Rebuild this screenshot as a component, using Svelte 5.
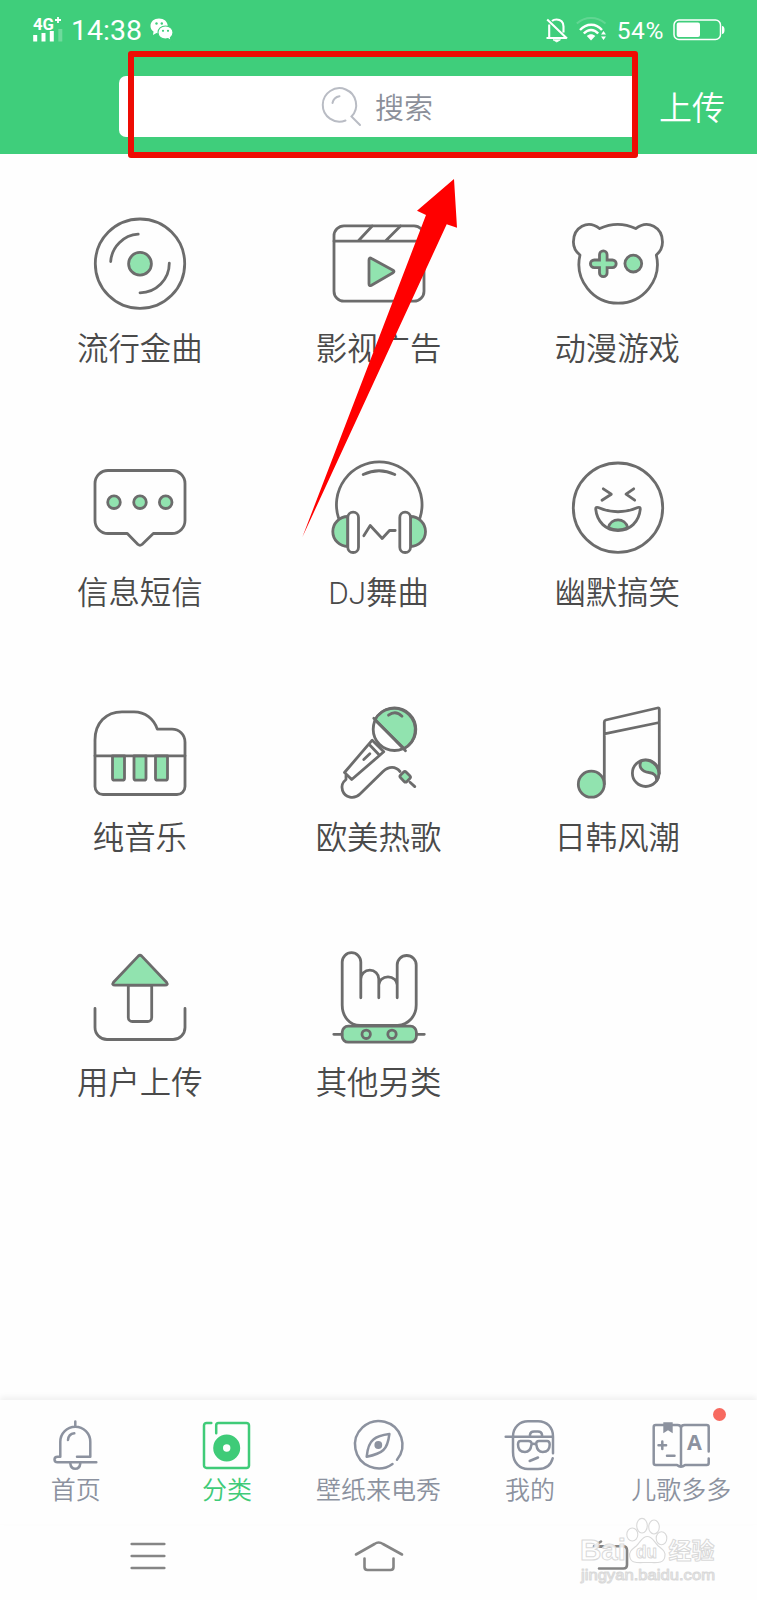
<script lang="ts">
  const categories = [
    { id: 'disc', label: '流行金曲' },
    { id: 'movie', label: '影视广告' },
    { id: 'bear', label: '动漫游戏' },
    { id: 'message', label: '信息短信' },
    { id: 'headphones', label: 'DJ舞曲' },
    { id: 'laugh', label: '幽默搞笑' },
    { id: 'piano', label: '纯音乐' },
    { id: 'mic', label: '欧美热歌' },
    { id: 'note', label: '日韩风潮' },
    { id: 'upload', label: '用户上传' },
    { id: 'rock', label: '其他另类' }
  ];

  const tabs = [
    { id: 'home', label: '首页' },
    { id: 'category', label: '分类' },
    { id: 'wallpaper', label: '壁纸来电秀' },
    { id: 'mine', label: '我的' },
    { id: 'kids', label: '儿歌多多', badge: true }
  ];

  let active = 'category';
</script>

<div class="screen">
  <header>
    <div class="status">
      <svg class="signal" width="30" height="28" viewBox="0 0 30 28">
        <text x="0" y="13.500" font-size="17" font-weight="700" textLength="21" lengthAdjust="spacingAndGlyphs">4G</text>
        <path d="M25 1v6M22 4h6" stroke="#fff" stroke-width="1.8" />
        <path d="M2.2 19v6.500M10.500 17v8.500M18.800 15v10.500" stroke="#fff" stroke-width="4" />
        <path d="M27.300 13v12.500" stroke="#fff" stroke-opacity=".25" stroke-width="4" />
      </svg>
      <span class="time">14:38</span>
      <svg class="wechat" width="24" height="24" viewBox="0 0 24 24">
        <path d="M9 .5C4 .5.5 3.700.5 7.900c0 2.300 1.200 4.300 3 5.700L3 17l3.500-2 2.500.4c5 0 8.700-3.300 8.700-7.500S14 .5 9 .5z" fill="#fff" />
        <path d="M15.500 8c-4.500 0-7.500 2.900-7.500 6.500 0 3.700 3 6.600 7.500 6.600l2.400-.4 3 1.800-.5-2.900c1.600-1.200 2.600-3 2.600-5.100 0-3.600-3.200-6.500-7.500-6.500z" fill="#fff" stroke="#3fce7b" stroke-width="1.100" />
        <g fill="#3fce7b">
          <circle cx="6.500" cy="5.500" r="1.200" /><circle cx="11.800" cy="5.500" r="1.200" />
          <circle cx="13" cy="12.800" r="1.100" /><circle cx="18" cy="12.800" r="1.100" />
        </g>
      </svg>
      <span class="spacer"></span>
      <svg class="mute" width="22" height="26" viewBox="0 0 22 26" fill="none" stroke="#fff" stroke-width="2.100">
        <path d="M.5 21h20M3.200 21V7.500M17.500 15.500V9.500c0-4.500-2.800-7-7-7-1.800 0-3.300.5-4.500 1.600M1.200 2.500 21 21.500" />
        <path d="M7 22.800h7.500l-3.700 2.200z" fill="#fff" stroke-width=".8" />
      </svg>
      <svg class="wifi" width="32" height="24" viewBox="0 0 32 24" fill="none" stroke="#fff" stroke-width="2.400">
        <path d="M.8 5.500C9-2 21-2 29.500 5.500" stroke-opacity=".18" stroke-width="2" />
        <path d="M4 12c6.500-7 16-7 22 0M7.800 15.500c4.500-4.600 10-4.600 14.400 0" />
        <path d="M10.800 18c2.700-2.400 5.800-2.400 8.500 0L15 22.500z" fill="#fff" stroke="none" />
        <path d="M25 16.500h5l-2.500-3.500zM25 18.500h5L27.500 22z" fill="#fff" stroke="none" />
      </svg>
      <span class="percent">54%</span>
      <svg class="battery" width="52" height="22" viewBox="0 0 52 22">
        <rect x="1" y="1" width="46.500" height="19.500" rx="5" fill="none" stroke="#fff" stroke-width="1.500" />
        <rect x="3.700" y="3.500" width="23.300" height="14.500" rx="2" fill="#fff" />
        <path d="M49 7q2.500 0 2.500 4T49 15z" fill="#fff" />
      </svg>
    </div>
    <div class="bar">
      <div class="search">
        <svg width="42" height="42" viewBox="0 0 42 42" fill="none" stroke="#b9bcc4" stroke-width="2" stroke-linecap="round">
          <path d="M24.500 34.500A16.700 16.700 0 1 1 30.500 30.500L39 39" />
          <path d="M11.500 17a8.500 8.500 0 0 1 7-6.800" />
        </svg>
        <span>搜索</span>
      </div>
      <span class="send">上传</span>
    </div>
    <div class="marker"></div>
  </header>

  <main>
    {#each categories as item}
      <div class="category">
        <svg class="icon" width="94" height="94" viewBox="0 0 94 94">
          {#if item.id === 'disc'}
            <circle cx="47" cy="46.700" r="44.700" />
            <circle class="tint" cx="47" cy="46.700" r="11.400" />
            <path d="M17.700 44.500a29.500 29.500 0 0 1 27.500-27.300M76.300 46.200A29.500 29.500 0 0 1 47 75.800" />
          {:else if item.id === 'movie'}
            <rect x="2" y="8.800" width="90" height="75.400" rx="10" />
            <path d="M2 24.200h90M26.200 24l14-15M53.500 24l15-15" />
            <path class="tint" d="M37 43q0-3 2.500-1.500L61 53.300q2 1.200 0 2.400L39.500 68.300Q37 69.500 37 67z" />
          {:else if item.id === 'bear'}
            <path d="M28.700 11.600Q46.700 3 64.700 11.600C77 2 91.500 10.500 91.500 25C91.500 30 89.500 34.500 85.300 38A39.200 39.200 0 1 1 9 38C4.500 34.500 2.400 30 2.400 25C2.400 10.500 16.500 2 28.700 11.600z" />
            <path d="M23.200 46.800h18.200M32.300 37.700v18.200" stroke-width="10.400" />
            <path d="M23.200 46.800h18.200M32.300 37.700v18.200" class="core" />
            <circle class="tint" cx="62.300" cy="46.600" r="8.400" />
          {:else if item.id === 'message'}
            <path d="M15 9.500h64a13 13 0 0 1 13 13v37a13 13 0 0 1-13 13H60.300L49 83.500q-2 1.600-4 0L34.300 72.500H15a13 13 0 0 1-13-13v-37a13 13 0 0 1 13-13z" />
            <circle class="tint" cx="21" cy="41.200" r="6.300" />
            <circle class="tint" cx="47" cy="41.200" r="6.300" />
            <circle class="tint" cx="72.700" cy="41.200" r="6.300" />
          {:else if item.id === 'headphones'}
            <path d="M6.500 56.800A42.800 42.800 0 1 1 88 56.800M31.200 13.500q15.800-7.500 31.600 0" />
            <path class="tint" d="M15.800 55.500a15 15 0 0 0 0 30zM78.500 55.500a15 15 0 0 1 0 30z" />
            <rect class="blank" x="15.800" y="51.200" width="10.700" height="40.300" rx="5.300" />
            <rect class="blank" x="67.800" y="51.200" width="10.700" height="40.300" rx="5.300" />
            <path d="m31.800 74.800 6.400-10.300 12 13 7.300-8h5.700" />
          {:else if item.id === 'laugh'}
            <circle cx="47" cy="46.700" r="44.700" />
            <path d="m32.300 27.800 8 5.400-9.300 6M62.700 27.800 55 33.200l8.700 6" />
            <path d="M24.700 48q0-2.200 2.500-1.500 19.800 8.500 39.600 0 2.500-.7 2.500 1.500C68 61 59 69.500 47 69.500S26 61 24.700 48z" />
            <path class="tint" d="M37.300 66.700c2.500-10.500 17-10.500 19.400 0q-9.700 4.500-19.400 0z" />
          {:else if item.id === 'piano'}
            <path d="M2 34C2 17 13 5.800 29 5.800h12c11 0 20 7 23.300 17.400H79c7 0 13 5 13 13v44.300a8 8 0 0 1-8 8H10a8 8 0 0 1-8-8z" />
            <path class="tint" d="M19.500 49.800h12v22.400a2 2 0 0 1-2 2h-8a2 2 0 0 1-2-2zM41 49.800h12v22.400a2 2 0 0 1-2 2h-8a2 2 0 0 1-2-2zM62.500 49.800h12v22.400a2 2 0 0 1-2 2h-8a2 2 0 0 1-2-2z" />
            <path d="M2 49.800h90" />
          {:else if item.id === 'mic'}
            <circle cx="62.500" cy="23.200" r="21.300" />
            <path class="tint" d="M43 14A21.300 21.300 0 1 1 72 42.500z" />
            <path d="m41.800 12.200 31.700 32.600M56.500 9.200q7-5.500 13.500 1" />
            <path d="M40.200 34.200 12.500 66.500l7.200 7 32.100-27.700zM37 38.200l10.500 11M31.800 53.500l6-5.700" />
            <path d="M14 69.500v4c-3.500 2.800-5 6.500-3.500 11 2.500 7.200 11.500 9.300 17.500 3.500l23-22.500c6-5.500 12.500-5.500 17 0M78 76.200l4.800 4.400" />
            <rect class="tint" x="68.700" y="66.800" width="9" height="8" rx="2" transform="rotate(45 73.200 70.800)" />
          {:else if item.id === 'note'}
            <circle class="tint" cx="20.300" cy="78.200" r="13" />
            <circle cx="74.700" cy="67.200" r="13.300" />
            <path class="tint" d="M70.500 54.800a13.300 13.300 0 0 1 15 20.200c.5-5-2-8-7.500-8.500C70 65.500 67 60 70.500 54.800z" />
            <path d="M33.300 78V16q0-1.500 1.500-2L86.500 2q1.800-.4 1.800 1.500v64M33.300 27.800l55-11.300" />
          {:else if item.id === 'upload'}
            <path d="M35.300 34.200h23.400v32.300a4 4 0 0 1-4 4H39.300a4 4 0 0 1-4-4z" />
            <path class="tint" d="m45.500 4.900-25 26.300q-2 3 1.500 3h50q3.500 0 1.500-3l-25-26.300q-1.500-1.300-3 0z" />
            <path d="M2 57.500v19a12 12 0 0 0 12 12h66a12 12 0 0 0 12-12v-19" />
          {:else}
            <path d="M28.800 46.800V11A9.300 9.300 0 0 0 10.200 11v43c0 11 7 20.500 18 20.500h37.500c11-1 18.500-9.500 18.500-20.500V14a9.400 9.400 0 0 0-19 0v32.800M28.800 28a9 8.800 0 0 1 18 0v18.800M46.800 34a9.200 8.200 0 0 1 18.400 0" />
            <rect class="tint" x="10.200" y="75.200" width="74.200" height="16" rx="6" />
            <circle class="tint" cx="34.200" cy="83.300" r="4.200" />
            <circle class="tint" cx="60" cy="83.300" r="4.200" />
            <path d="M1.800 83.300h8M84.800 83.300h7.500" />
          {/if}
        </svg>
        <span class="label">{item.label}</span>
      </div>
    {/each}
  </main>

  <nav class="tabs">
    {#each tabs as tab}
      <div class="tab" class:active={tab.id === active}>
        <svg width="60" height="50" viewBox="0 0 60 50">
          {#if tab.id === 'home'}
            <path d="M29.300 1.400v5M31 36.700h13.300v-15a15 15 0 0 0-30 0v15H11.500c-4 0-4 5.500 0 5.500h38.800" />
            <path d="M24.300 43.500c.8 7 9.200 7 10 0M22 20q.5-6 6.300-6.700" />
          {:else if tab.id === 'category'}
            <path d="M14.300 2.900H9.500A2.500 2.500 0 0 0 7 5.400v40A2.500 2.500 0 0 0 9.500 48h40a2.500 2.500 0 0 0 2.500-2.500v-40a2.500 2.500 0 0 0-2.500-2.600H21.500q-2.300 0-2.300 2.300v8" />
            <circle cx="29.700" cy="28" r="8.600" stroke-width="9.800" />
          {:else if tab.id === 'wallpaper'}
            <path d="M48 39.800A23.700 23.700 0 1 0 43.500 44" />
            <path d="M17.700 36.700q1.200-13 6.700-17.200Q29 15.500 40.400 14q-1.500 12-6 16-4.500 4.300-16.700 6.700z" />
            <circle cx="29.300" cy="25" r="3.900" fill="currentColor" stroke="none" />
          {:else if tab.id === 'mine'}
            <path d="M5.700 16.700h47.300v16.600M13 16.700V32c0 11 7 17 15 17h10c8 0 13-4 14.700-10.700M13 16.700C13 7 20 1.300 28 1.300h10c9 0 15 6 15 15.400M30 15.500v-1q.5-3 4-3h4q3.500 0 4 3v1" />
            <path d="M20.500 21h8q3.500 0 3 3.500-1 7.500-6.500 7.500-7 0-7-7.500 0-3.500 2.500-3.500zM39 21h8q2.700 0 2.700 3.500 0 7.500-7 7.500-5.500 0-6.400-7.500-.4-3.500 2.700-3.500zM31.500 24.500q2.300-1.500 4.600 0M29.700 41l8.300-3.500" />
          {:else}
            <path d="M57.700 31.500V7a2 2 0 0 0-2-2H33.500Q30 5 30 8 30 5 26.500 5H4.700a2 2 0 0 0-2 2v36a2 2 0 0 0 2 2H26q4 3.500 8 0h21.700a2 2 0 0 0 2-2v-4.500M30 8v38" />
            <path d="M12.300 2.300h9.400v11l-4.700-3-4.700 3z" fill="currentColor" stroke="none" />
            <path d="M7.500 25.300h7.600M11.300 21.500v7.600M16 35.700h7.500" />
            <text x="43.400" y="30" font-size="21.500" font-weight="700" text-anchor="middle">A</text>
          {/if}
        </svg>
        <span>{tab.label}</span>
        {#if tab.badge}<i class="badge"></i>{/if}
      </div>
    {/each}
  </nav>

  <div class="system">
    <svg width="50" height="34" viewBox="0 0 50 34"><path d="M8.700 5h32.600M8.700 17h32.600M8.700 29h32.600" /></svg>
    <svg width="50" height="34" viewBox="0 0 50 34"><path d="M2 15.500 20.500 5q4-3 8.500 0l19 10.500M10.500 19.500V28q0 3 3 3h23q3 0 3-3v-8.500" /></svg>
    <svg width="50" height="34" viewBox="0 0 50 34"><path d="M10 7.300h28q4 0 4 4V26q0 3.500-3.500 3.500H14M16 2.500 9 7.300l7 .5" /></svg>

    <svg class="watermark" width="150" height="76" viewBox="0 0 150 76">
      <g fill="#fff" fill-opacity=".75" stroke="#d9d9d9" stroke-width="1.100">
        <ellipse cx="61.300" cy="22.500" rx="5.500" ry="6.500" />
        <ellipse cx="71" cy="13.700" rx="5.300" ry="7.300" />
        <ellipse cx="83" cy="15" rx="5.300" ry="7" />
        <ellipse cx="90.500" cy="26.300" rx="5.300" ry="6.500" />
        <path d="M76.300 24.500c5 0 6.500 5 10.500 9 4 3.500 8.500 6 7 11.500-1.500 7-8 5.500-17.500 5.500s-16 1.500-17.500-5.500c-1.500-5.500 3-8 7-11.500 4-4 5.500-9 10.500-9z" />
      </g>
      <g class="mark">
        <text x="9" y="48" font-size="30" font-weight="700" textLength="46" lengthAdjust="spacingAndGlyphs">Bai</text>
        <text x="65" y="45.500" font-size="19" font-weight="700" textLength="21" lengthAdjust="spacingAndGlyphs">du</text>
        <text class="cjk" x="97.500" y="47" font-size="23" font-weight="700" textLength="46">经验</text>
        <text x="10" y="68" font-size="15" textLength="134" lengthAdjust="spacingAndGlyphs">jingyan.baidu.com</text>
      </g>
    </svg>
  </div>

  <svg class="pointer" width="160" height="362" viewBox="0 0 160 362">
    <path d="M154 2l3 48.700-10.300-3.400L2.300 360.300 126 38l-9-4.300z" fill="#f00" />
  </svg>
</div>

<style>
  :global(body) {
    background: #fefefe;
  }

  .screen {
    position: relative;
    display: flex;
    flex-direction: column;
    width: 757px;
    height: 1600px;
    overflow: hidden;
    background: #fefefe;
    color: #4a4a4a;
    font-family: Roboto, 'Noto Sans CJK SC', sans-serif;
    font-weight: 350;
  }

  svg {
    display: block;
    flex: none;
    overflow: visible;
  }

  header {
    position: relative;
    box-sizing: border-box;
    height: 154px;
    background: #3fce7b;
    color: #fff;
  }

  .status {
    display: flex;
    align-items: center;
    height: 60px;
    padding: 0 32px 0 33px;
    font-weight: 400;
  }

  .signal text {
    fill: #fff;
  }

  .time {
    width: 72px;
    margin: 2px 0 0 8px;
    font-size: 28.5px;
    line-height: 36px;
  }

  .wechat {
    margin-left: 7px;
  }

  .spacer {
    flex: 1;
  }

  .wifi {
    margin-left: 8px;
  }

  .percent {
    margin: 1px 9px 0 9px;
    font-size: 24.5px;
    letter-spacing: 0.6px;
  }

  .bar {
    display: flex;
    align-items: center;
    height: 61px;
    margin-top: 16px;
    padding-left: 119px;
  }

  .search {
    display: flex;
    align-items: center;
    justify-content: center;
    width: 516px;
    height: 61px;
    border-radius: 7px 0 0 7px;
    background: #fff;
    color: #8b8f99;
    font-size: 29px;
  }

  .search span {
    margin: -2px 0 0 12px;
  }

  .send {
    margin: -2px 0 0 24px;
    font-size: 33px;
  }

  /* Highlight frame around the search box */
  .marker {
    position: absolute;
    top: 50.5px;
    left: 128px;
    box-sizing: border-box;
    width: 510px;
    height: 107px;
    border: 6px solid #ee0c04;
    border-radius: 3px;
    z-index: 1;
  }

  main {
    flex: 1;
    display: grid;
    grid-template-columns: repeat(3, 1fr);
    grid-auto-rows: 244.8px;
    align-content: start;
    padding: 62.6px 20px 0 21px;
  }

  .category {
    display: flex;
    flex-direction: column;
    align-items: center;
  }

  .icon {
    fill: none;
    stroke: #6c6c6c;
    stroke-width: 2.8;
    stroke-linecap: round;
    stroke-linejoin: round;
  }

  .icon .tint {
    fill: #91e3af;
  }

  .icon .blank {
    fill: #fefefe;
  }

  .icon .core {
    stroke: #91e3af;
    stroke-width: 4.8;
  }

  .label {
    margin: 17px 0 0 -1px;
    font-size: 31.4px;
    line-height: 44px;
  }

  .tabs {
    display: flex;
    box-sizing: border-box;
    height: 124px;
    padding-top: 20px;
    box-shadow: 0 -3px 6px rgba(0, 20, 10, 0.06);
  }

  .tab {
    position: relative;
    display: flex;
    flex: 1;
    flex-direction: column;
    align-items: center;
    color: #8c929f;
    font-size: 25px;
    line-height: 36px;
  }

  .tab svg {
    fill: none;
    stroke: currentColor;
    stroke-width: 2.5;
    stroke-linecap: round;
    stroke-linejoin: round;
  }

  .tab text {
    fill: currentColor;
    stroke: none;
    font-family: 'Open Sans', sans-serif;
  }

  .tab span {
    margin-top: 3px;
  }

  .tab.active {
    color: #3fcb78;
  }

  .badge {
    position: absolute;
    top: -12px;
    right: 31px;
    width: 13px;
    height: 13px;
    border-radius: 50%;
    background: #f76a60;
  }

  .system {
    position: relative;
    display: grid;
    grid-template-columns: repeat(3, 1fr);
    justify-items: center;
    box-sizing: border-box;
    height: 76px;
    padding: 14.5px 32px 0;
    fill: none;
    stroke: #858585;
    stroke-width: 2.6;
    stroke-linecap: round;
    stroke-linejoin: round;
  }

  .watermark {
    position: absolute;
    top: -12px;
    left: 571px;
  }

  .mark {
    fill: #fff;
    fill-opacity: 0.85;
    stroke: #d9d9d9;
    stroke-width: 1;
    font-family: 'Liberation Sans', sans-serif;
  }

  .mark .cjk {
    font-family: 'Noto Sans CJK SC', sans-serif;
  }

  .pointer {
    position: absolute;
    top: 177px;
    left: 300px;
  }
</style>
